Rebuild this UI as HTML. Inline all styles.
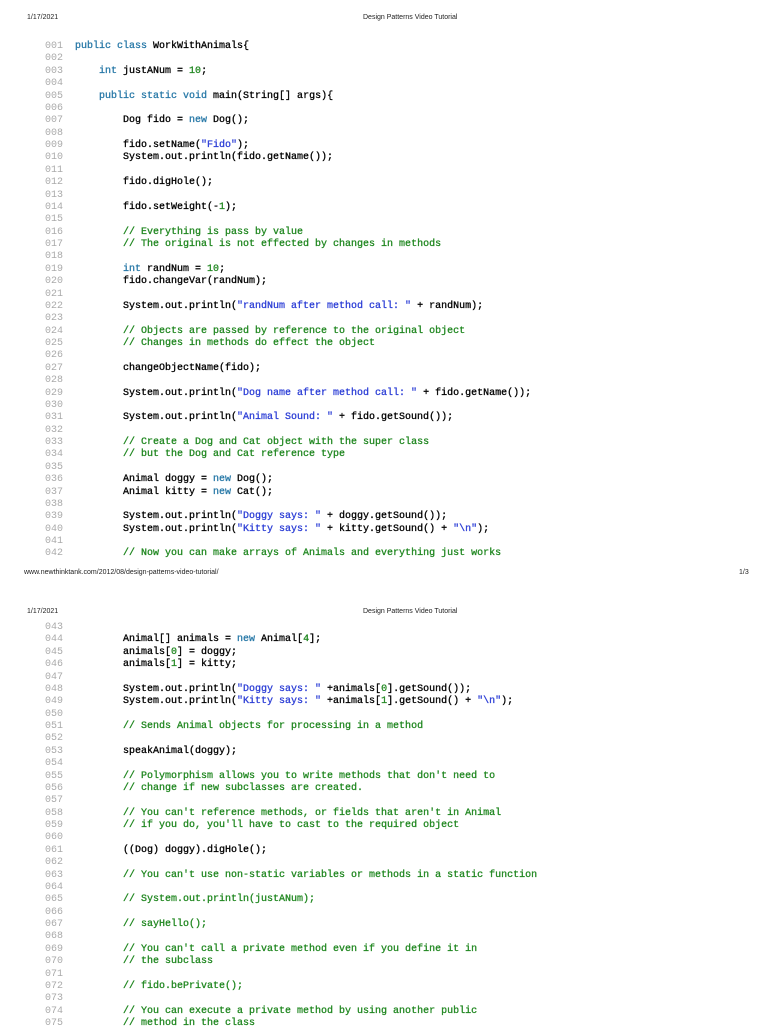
<!DOCTYPE html>
<html><head><meta charset="utf-8"><style>
body{margin:0;width:768px;height:1024px;background:#fff;position:relative;overflow:hidden;font-family:"Liberation Sans",sans-serif}
.h{position:absolute;font-size:7px;color:#222;white-space:nowrap}
pre{position:absolute;margin:0;font-family:"Liberation Mono",monospace;font-size:10px;line-height:12.37px;color:#000;font-weight:normal;-webkit-text-stroke:0.3px}
.n{left:45px;color:#aaa;-webkit-text-stroke:0}
.c{left:75px}
.k{color:#2a7aa8}
.s{color:#2d3fd6}
.g{color:#228822}
</style></head><body>
<div class="h" style="left:27px;top:14px">1/17/2021</div>
<div class="h" style="left:363px;top:14px">Design Patterns Video Tutorial</div>
<pre class="n" style="top:41px">001
002
003
004
005
006
007
008
009
010
011
012
013
014
015
016
017
018
019
020
021
022
023
024
025
026
027
028
029
030
031
032
033
034
035
036
037
038
039
040
041
042</pre>
<pre class="c" style="top:41px"><span class="k">public class</span> WorkWithAnimals{

    <span class="k">int</span> justANum = <span class="g">10</span>;

    <span class="k">public static void</span> main(String[] args){

        Dog fido = <span class="k">new</span> Dog();

        fido.setName(<span class="s">"Fido"</span>);
        System.out.println(fido.getName());

        fido.digHole();

        fido.setWeight(-<span class="g">1</span>);

        <span class="g">// Everything is pass by value</span>
        <span class="g">// The original is not effected by changes in methods</span>

        <span class="k">int</span> randNum = <span class="g">10</span>;
        fido.changeVar(randNum);

        System.out.println(<span class="s">"randNum after method call: "</span> + randNum);

        <span class="g">// Objects are passed by reference to the original object</span>
        <span class="g">// Changes in methods do effect the object</span>

        changeObjectName(fido);

        System.out.println(<span class="s">"Dog name after method call: "</span> + fido.getName());

        System.out.println(<span class="s">"Animal Sound: "</span> + fido.getSound());

        <span class="g">// Create a Dog and Cat object with the super class</span>
        <span class="g">// but the Dog and Cat reference type</span>

        Animal doggy = <span class="k">new</span> Dog();
        Animal kitty = <span class="k">new</span> Cat();

        System.out.println(<span class="s">"Doggy says: "</span> + doggy.getSound());
        System.out.println(<span class="s">"Kitty says: "</span> + kitty.getSound() + <span class="s">"\n"</span>);

        <span class="g">// Now you can make arrays of Animals and everything just works</span></pre>
<div class="h" style="left:24px;top:569px">www.newthinktank.com/2012/08/design-patterns-video-tutorial/</div>
<div class="h" style="left:739px;top:569px">1/3</div>
<div class="h" style="left:27px;top:608px">1/17/2021</div>
<div class="h" style="left:363px;top:608px">Design Patterns Video Tutorial</div>
<pre class="n" style="top:622px">043
044
045
046
047
048
049
050
051
052
053
054
055
056
057
058
059
060
061
062
063
064
065
066
067
068
069
070
071
072
073
074
075</pre>
<pre class="c" style="top:622px"> 
        Animal[] animals = <span class="k">new</span> Animal[<span class="g">4</span>];
        animals[<span class="g">0</span>] = doggy;
        animals[<span class="g">1</span>] = kitty;

        System.out.println(<span class="s">"Doggy says: "</span> +animals[<span class="g">0</span>].getSound());
        System.out.println(<span class="s">"Kitty says: "</span> +animals[<span class="g">1</span>].getSound() + <span class="s">"\n"</span>);

        <span class="g">// Sends Animal objects for processing in a method</span>

        speakAnimal(doggy);

        <span class="g">// Polymorphism allows you to write methods that don't need to</span>
        <span class="g">// change if new subclasses are created.</span>

        <span class="g">// You can't reference methods, or fields that aren't in Animal</span>
        <span class="g">// if you do, you'll have to cast to the required object</span>

        ((Dog) doggy).digHole();

        <span class="g">// You can't use non-static variables or methods in a static function</span>

        <span class="g">// System.out.println(justANum);</span>

        <span class="g">// sayHello();</span>

        <span class="g">// You can't call a private method even if you define it in</span>
        <span class="g">// the subclass</span>

        <span class="g">// fido.bePrivate();</span>

        <span class="g">// You can execute a private method by using another public</span>
        <span class="g">// method in the class</span></pre>
</body></html>
